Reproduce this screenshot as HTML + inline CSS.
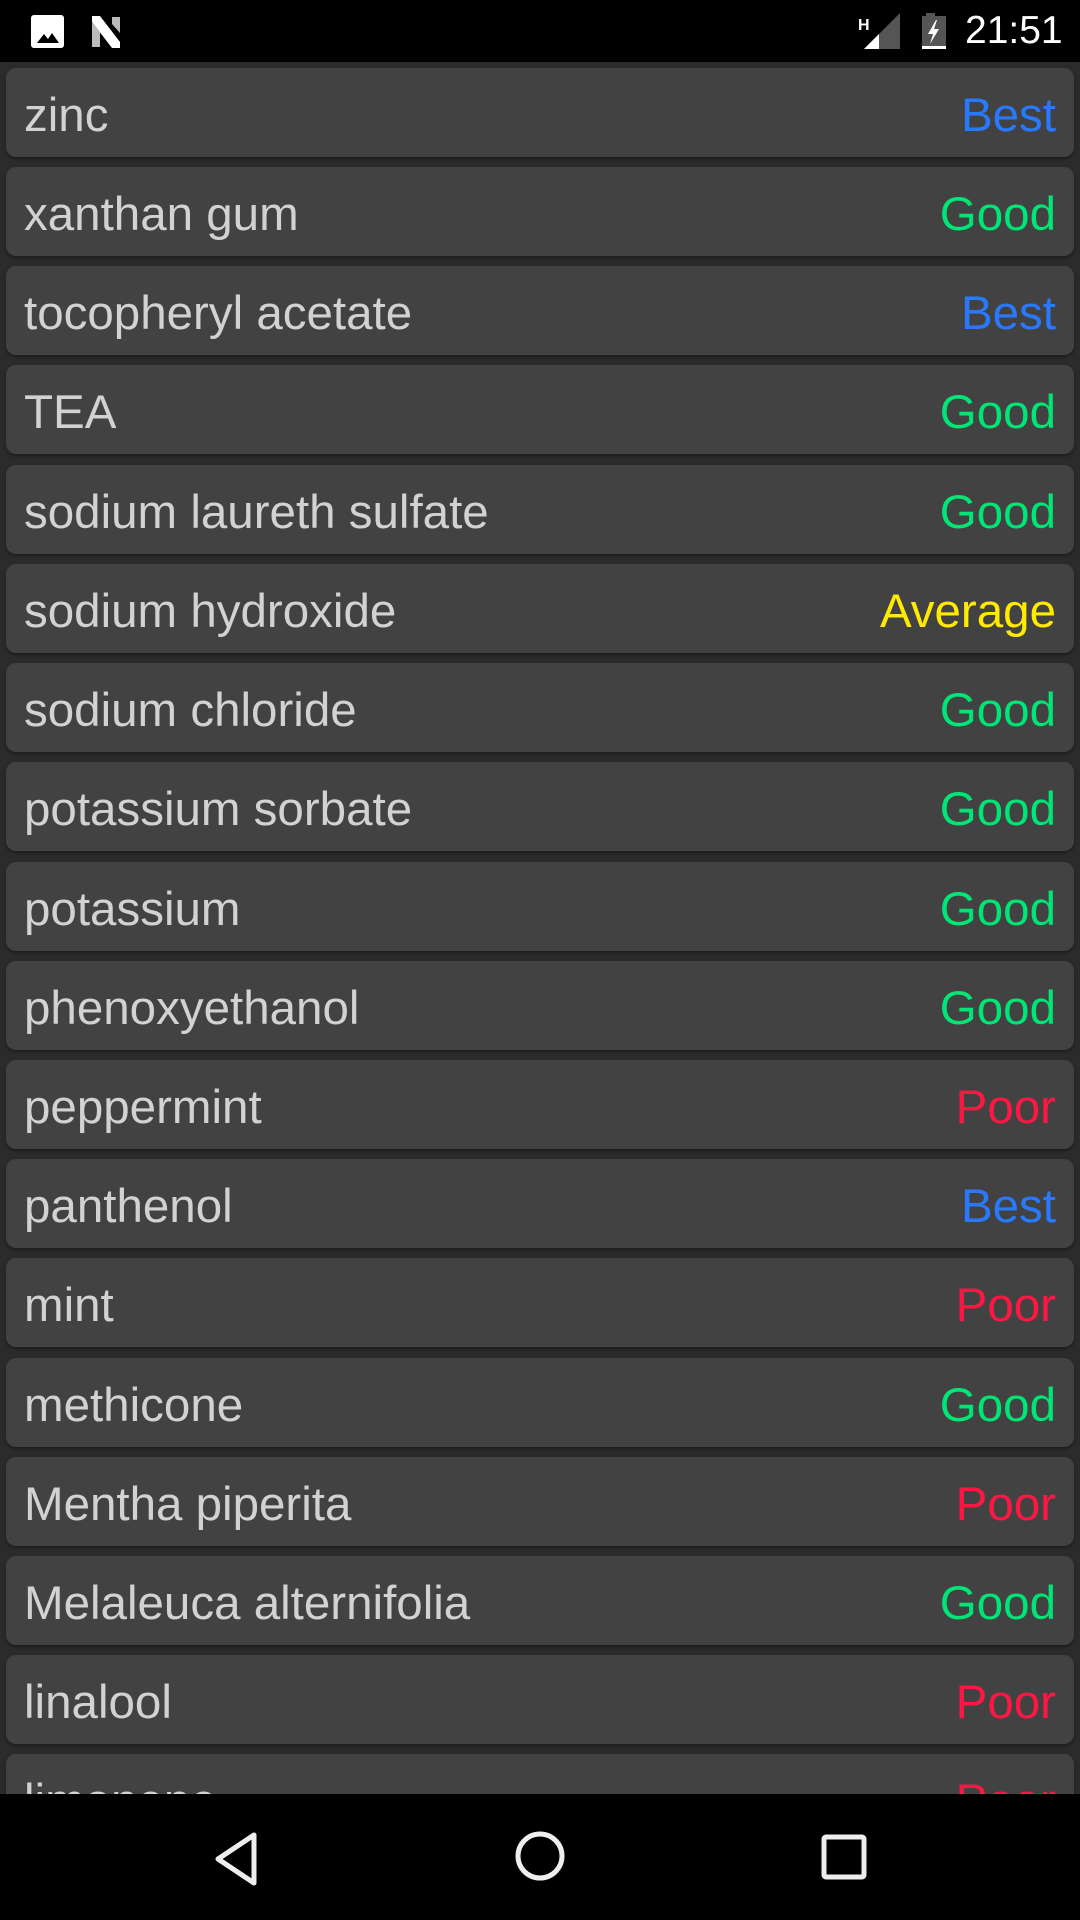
<!DOCTYPE html>
<html><head><meta charset="utf-8">
<style>
html,body{margin:0;padding:0;}
body{width:1080px;height:1920px;background:#2b2b2b;position:relative;overflow:hidden;font-family:"Liberation Sans",sans-serif;}
.sb{position:absolute;left:0;top:0;width:1080px;height:62px;background:#000;}
.nav{position:absolute;left:0;top:1794px;width:1080px;height:126px;background:#000;}
.card{position:absolute;left:6px;width:1068px;height:89px;background:#424242;border-radius:10px;box-shadow:0 2px 3px rgba(0,0,0,.35);}
.card .n{position:absolute;left:18px;top:3px;line-height:89px;font-size:47.5px;color:#d2d2d2;}
.card .r{position:absolute;right:18px;top:3px;line-height:89px;font-size:47.5px;}
.B{color:#2979ff}.G{color:#00e676}.A{color:#ffea00}.P{color:#ff1744}
.time{position:absolute;left:965px;top:9px;font-size:39px;color:#fff;}
</style></head><body>
<div class="sb">
<svg width="1080" height="62" style="position:absolute;left:0;top:0">
<rect x="31" y="15" width="33" height="33" rx="3" fill="#fff"/>
<path d="M37 43 L44 34 L48 39 L52 33 L59 43 Z" fill="#000"/>
<path d="M92 16 L100 16 L120 42 L120 48 L112 48 L92 22 Z" fill="#fff"/>
<path d="M92 22 L100 32 L100 47 L92 47 Z" fill="#bbb"/>
<path d="M112 17 L120 17 L120 33 L112 24 Z" fill="#bbb"/>
<path d="M864 49 L900 13 L900 49 Z" fill="#555"/>
<path d="M864 49 L879 34 L879 49 Z" fill="#fff"/>
<text x="858" y="30" font-family="Liberation Sans" font-size="16" font-weight="bold" fill="#fff">H</text>
<rect x="926" y="13" width="9" height="4" fill="#555"/>
<rect x="922" y="16" width="24" height="31" fill="#555"/>
<rect x="922" y="46" width="24" height="3" fill="#fff"/>
<path d="M936 20 L928 34 L933 34 L930 44 L939 29 L934 29 L937 20 Z" fill="#fff"/>
</svg>
<div class="time">21:51</div>
</div>

<div class="card" style="top:68px"><span class="n">zinc</span><span class="r B">Best</span></div>
<div class="card" style="top:167px"><span class="n">xanthan gum</span><span class="r G">Good</span></div>
<div class="card" style="top:266px"><span class="n">tocopheryl acetate</span><span class="r B">Best</span></div>
<div class="card" style="top:365px"><span class="n">TEA</span><span class="r G">Good</span></div>
<div class="card" style="top:465px"><span class="n">sodium laureth sulfate</span><span class="r G">Good</span></div>
<div class="card" style="top:564px"><span class="n">sodium hydroxide</span><span class="r A">Average</span></div>
<div class="card" style="top:663px"><span class="n">sodium chloride</span><span class="r G">Good</span></div>
<div class="card" style="top:762px"><span class="n">potassium sorbate</span><span class="r G">Good</span></div>
<div class="card" style="top:862px"><span class="n">potassium</span><span class="r G">Good</span></div>
<div class="card" style="top:961px"><span class="n">phenoxyethanol</span><span class="r G">Good</span></div>
<div class="card" style="top:1060px"><span class="n">peppermint</span><span class="r P">Poor</span></div>
<div class="card" style="top:1159px"><span class="n">panthenol</span><span class="r B">Best</span></div>
<div class="card" style="top:1258px"><span class="n">mint</span><span class="r P">Poor</span></div>
<div class="card" style="top:1358px"><span class="n">methicone</span><span class="r G">Good</span></div>
<div class="card" style="top:1457px"><span class="n">Mentha piperita</span><span class="r P">Poor</span></div>
<div class="card" style="top:1556px"><span class="n">Melaleuca alternifolia</span><span class="r G">Good</span></div>
<div class="card" style="top:1655px"><span class="n">linalool</span><span class="r P">Poor</span></div>
<div class="card" style="top:1754px"><span class="n">limonene</span><span class="r P">Poor</span></div>

<div class="nav">
<svg width="1080" height="126" style="position:absolute;left:0;top:0">
<path d="M254 41 L254 89 L218 65 Z" fill="none" stroke="#eee" stroke-width="5" stroke-linejoin="round"/>
<circle cx="540" cy="62" r="22" fill="none" stroke="#eee" stroke-width="5"/>
<rect x="824" y="43" width="40" height="40" rx="2" fill="none" stroke="#eee" stroke-width="5"/>
</svg>
</div>
</body></html>
